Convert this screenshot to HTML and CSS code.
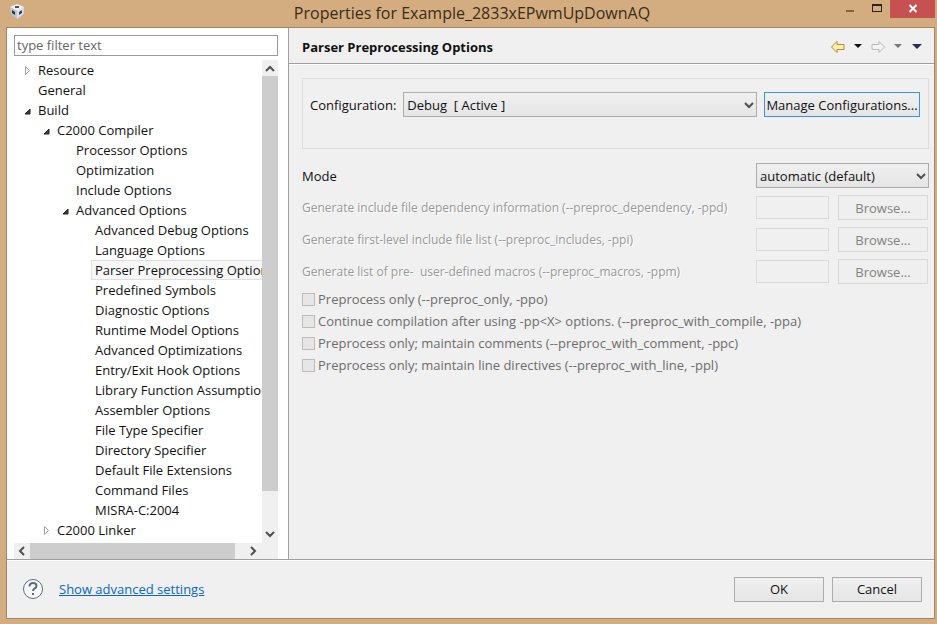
FILE: index.html
```html
<!DOCTYPE html>
<html lang="en">
<head>
<meta charset="utf-8">
<title>Properties for Example_2833xEPwmUpDownAQ</title>
<link rel="stylesheet" href="styles.css">
</head>
<body>
<header class="titlebar">
  <svg class="app-icon" viewBox="0 0 18 18" aria-hidden="true">
    <path d="M9 1l7 3v7l-7 5-6-5-1-7z" fill="#c3cad3"/>
    <path d="M9 1l7 3-7 4-7-4z" fill="#eef1f4"/>
    <path d="M2 4l7 4v8l-6-5z" fill="#bcc4ce"/>
    <path d="M16 4L9 8v8l6-5z" fill="#dde2e8"/>
    <path d="M7 3h4v2H7z" fill="#4b5260"/>
    <path d="M4 7l3 2v3l-3-2z" fill="#2d3442"/>
    <path d="M11 9l3-2v3l-3 2z" fill="#3a4150"/>
  </svg>
  <h1 class="title">Properties for Example_2833xEPwmUpDownAQ</h1>
  <div class="window-controls">
    <button class="win-btn" type="button" aria-label="Minimize"><svg viewBox="0 0 26 18"><path d="M8 10h8v2H8z" fill="#7d6543"/></svg></button>
    <button class="win-btn" type="button" aria-label="Maximize"><svg viewBox="0 0 26 18"><path d="M8 4h10v8H8zM9 6v5h8V6z" fill="#2d2314" fill-rule="evenodd"/></svg></button>
    <button class="win-btn close" type="button" aria-label="Close"><svg viewBox="0 0 45 18"><path d="M19.500 5l7 7M26.500 5l-7 7" stroke="#fff" stroke-width="2"/></svg></button>
  </div>
</header>
<div class="client">
  <div class="panes">
    <nav class="sidebar" aria-label="Property pages">
      <input class="filter" type="text" placeholder="type filter text" aria-label="Filter">
      <div class="tree-box">
        <ul class="tree">
          <li><div class="row"><button class="twisty" type="button" aria-label="Expand Resource"><svg viewBox="0 0 20 20"><path d="M11.500 6.500v8l4-4z" fill="#fff" stroke="#a0a0a0"/></svg></button><span class="node">Resource</span></div></li>
          <li><div class="row"><span class="node leaf">General</span></div></li>
          <li><div class="row"><button class="twisty" type="button" aria-label="Collapse Build"><svg viewBox="0 0 20 20"><path d="M16 9v5h-5z" fill="#404040" stroke="#202020" stroke-linejoin="round"/></svg></button><span class="node">Build</span></div>
            <ul>
              <li><div class="row"><button class="twisty" type="button" aria-label="Collapse C2000 Compiler"><svg viewBox="0 0 20 20"><path d="M16 9v5h-5z" fill="#404040" stroke="#202020" stroke-linejoin="round"/></svg></button><span class="node">C2000 Compiler</span></div>
                <ul>
                  <li><div class="row"><span class="node leaf">Processor Options</span></div></li>
                  <li><div class="row"><span class="node leaf">Optimization</span></div></li>
                  <li><div class="row"><span class="node leaf">Include Options</span></div></li>
                  <li><div class="row"><button class="twisty" type="button" aria-label="Collapse Advanced Options"><svg viewBox="0 0 20 20"><path d="M16 9v5h-5z" fill="#404040" stroke="#202020" stroke-linejoin="round"/></svg></button><span class="node">Advanced Options</span></div>
                    <ul>
                      <li><div class="row"><span class="node leaf">Advanced Debug Options</span></div></li>
                      <li><div class="row"><span class="node leaf">Language Options</span></div></li>
                      <li><div class="row"><span class="node leaf selected">Parser Preprocessing Options</span></div></li>
                      <li><div class="row"><span class="node leaf">Predefined Symbols</span></div></li>
                      <li><div class="row"><span class="node leaf">Diagnostic Options</span></div></li>
                      <li><div class="row"><span class="node leaf">Runtime Model Options</span></div></li>
                      <li><div class="row"><span class="node leaf">Advanced Optimizations</span></div></li>
                      <li><div class="row"><span class="node leaf">Entry/Exit Hook Options</span></div></li>
                      <li><div class="row"><span class="node leaf">Library Function Assumptions</span></div></li>
                      <li><div class="row"><span class="node leaf">Assembler Options</span></div></li>
                      <li><div class="row"><span class="node leaf">File Type Specifier</span></div></li>
                      <li><div class="row"><span class="node leaf">Directory Specifier</span></div></li>
                      <li><div class="row"><span class="node leaf">Default File Extensions</span></div></li>
                      <li><div class="row"><span class="node leaf">Command Files</span></div></li>
                      <li><div class="row"><span class="node leaf">MISRA-C:2004</span></div></li>
                    </ul>
                  </li>
                </ul>
              </li>
              <li><div class="row"><button class="twisty" type="button" aria-label="Expand C2000 Linker"><svg viewBox="0 0 20 20"><path d="M11.500 6.500v8l4-4z" fill="#fff" stroke="#a0a0a0"/></svg></button><span class="node">C2000 Linker</span></div></li>
            </ul>
          </li>
        </ul>
        <div class="scroll vertical">
          <button type="button" aria-label="Scroll up"><svg viewBox="0 0 16 16"><path d="M4 11l4-4 4 4" /></svg></button>
          <div class="track"><div class="thumb"></div></div>
          <button type="button" aria-label="Scroll down"><svg viewBox="0 0 16 16"><path d="M4 5l4 4 4-4" /></svg></button>
        </div>
        <div class="scroll horizontal">
          <button type="button" aria-label="Scroll left"><svg viewBox="0 0 16 16"><path d="M10 4L6 8l4 4" /></svg></button>
          <div class="track"><div class="thumb"></div></div>
          <button type="button" aria-label="Scroll right"><svg viewBox="0 0 16 16"><path d="M5 4l4 4-4 4" /></svg></button>
        </div>
        <div class="corner"></div>
      </div>
    </nav>
    <main class="page">
      <div class="page-head">
        <h2>Parser Preprocessing Options</h2>
        <div class="history">
          <button type="button" aria-label="Back"><svg width="16" height="14" viewBox="0 0 16 14"><path d="M1.500 7L7 1.500v3h7v5H7v3z" fill="#fdf0b4" stroke="#b58a2c"/></svg></button>
          <button class="drop" type="button" aria-label="Back history"><svg width="8" height="5" viewBox="0 0 8 5"><path d="M0 0h8L4 4z" fill="#111"/></svg></button>
          <button type="button" aria-label="Forward"><svg width="16" height="14" viewBox="0 0 16 14"><path d="M14.500 7L9 1.500v3H2v5h7v3z" fill="#f4f4f4" stroke="#b9b9b9"/></svg></button>
          <button class="drop" type="button" aria-label="Forward history"><svg width="8" height="5" viewBox="0 0 8 5"><path d="M0 0h8L4 4z" fill="#777"/></svg></button>
          <button class="menu" type="button" aria-label="View menu"><svg width="10" height="5" viewBox="0 0 10 5"><path d="M0 0h10L5 5z" fill="#2c2c5c"/></svg></button>
        </div>
      </div>
      <form class="form">
        <div class="config">
          <label for="config">Configuration:</label>
          <div class="select grow">
            <select id="config"><option>Debug&nbsp; [ Active ]</option></select>
            <svg viewBox="0 0 10 8" aria-hidden="true"><path d="M1 2l4 4 4-4"/></svg>
          </div>
          <button class="btn focus" type="button">Manage Configurations...</button>
        </div>
        <div class="mode">
          <label for="mode">Mode</label>
          <div class="select">
            <select id="mode"><option>automatic (default)</option></select>
            <svg viewBox="0 0 10 8" aria-hidden="true"><path d="M1 2l4 4 4-4"/></svg>
          </div>
        </div>
        <div class="field"><label for="ppd">Generate include file dependency information (--preproc_dependency, -ppd)</label><input id="ppd" type="text" disabled><button class="btn" type="button" disabled>Browse...</button></div>
        <div class="field"><label for="ppi">Generate first-level include file list (--preproc_includes, -ppi)</label><input id="ppi" type="text" disabled><button class="btn" type="button" disabled>Browse...</button></div>
        <div class="field"><label for="ppm">Generate list of pre-&nbsp; user-defined macros (--preproc_macros, -ppm)</label><input id="ppm" type="text" disabled><button class="btn" type="button" disabled>Browse...</button></div>
        <div class="checks">
          <label><input type="checkbox" disabled>Preprocess only (--preproc_only, -ppo)</label>
          <label><input type="checkbox" disabled>Continue compilation after using -pp&lt;X&gt; options. (--preproc_with_compile, -ppa)</label>
          <label><input type="checkbox" disabled>Preprocess only; maintain comments (--preproc_with_comment, -ppc)</label>
          <label><input type="checkbox" disabled>Preprocess only; maintain line directives (--preproc_with_line, -ppl)</label>
        </div>
      </form>
    </main>
  </div>
  <footer class="footer">
    <button class="help" type="button" aria-label="Help"><svg viewBox="0 0 22 22"><circle cx="11" cy="11" r="9.500" fill="#f8f9fb" stroke="#5f6b85"/><path d="M7.500 8.500q0-3.500 3.500-3.500t3.500 3q0 1.500-2 2.700-1.500 1-1.500 2.300" fill="none" stroke="#5f6b85" stroke-width="2"/><path d="M10 15h2v2h-2z" fill="#5f6b85"/></svg></button>
    <a href="#">Show advanced settings</a>
    <div class="actions">
      <button class="btn" type="button">OK</button>
      <button class="btn" type="button">Cancel</button>
    </div>
  </footer>
</div>
</body>
</html>
```
FILE: styles.css
```css
* { box-sizing: border-box; }

body {
  margin: 0;
  min-height: 100vh;
  display: flex;
  flex-direction: column;
  padding: 0 2px 5px 6px;
  background: #d3ac7f;
  color: #111;
  font: 13px/20px "Open Sans", "Noto Sans", sans-serif;
}

button, input, select { font: inherit; color: inherit; }
button { padding: 0; border: 0; background: none; }
svg { display: block; }

.titlebar { display: flex; height: 27px; }
.app-icon { width: 18px; height: 18px; margin: 3px 0 0 2px; }
.title {
  flex: 1;
  margin: 0 0 0 80px;
  font-size: 16px;
  line-height: 27px;
  font-weight: 400;
  text-align: center;
  color: #3a2c1a;
}
.window-controls { display: flex; align-items: flex-start; }
.win-btn { width: 26px; height: 18px; }
.win-btn.close { width: 45px; background: #c75050; }

.client {
  flex: 1;
  display: flex;
  flex-direction: column;
  border: 1px solid #a5855f;
  background: #f0f0f0;
}
.panes { flex: 1; display: flex; }

.sidebar {
  width: 282px;
  display: flex;
  flex-direction: column;
  padding: 7px 10px 0 7px;
  background: #fff;
  border-right: 1px solid #a0a0a0;
}
.filter {
  height: 21px;
  width: 100%;
  padding: 0 2px 1px;
  border: 1px solid #999;
  background: #fff;
}
.filter::placeholder { color: #666; opacity: 1; }
.tree-box {
  flex: 1;
  margin-top: 4px;
  display: grid;
  grid-template: 1fr 16px / 1fr 16px;
}
.tree { overflow: hidden; min-width: 0; }
.tree, .tree ul { margin: 0; padding: 0; list-style: none; }
.tree ul { padding-left: 19px; }
.row { display: flex; height: 20px; }
.twisty { flex: none; width: 20px; height: 20px; }
.node {
  padding: 0 3px;
  border: 1px solid transparent;
  line-height: 18px;
  white-space: nowrap;
}
.leaf { margin-left: 20px; }
.selected { background: #f7f7f7; border-color: #dedede; }

.scroll { display: flex; background: #f0f0f0; }
.scroll path { fill: none; stroke: #505050; stroke-width: 2; }
.scroll button { width: 16px; height: 16px; }
.vertical { flex-direction: column; }
.track { flex: 1; display: flex; }
.vertical .track { flex-direction: column; }
.thumb { background: #cdcdcd; }
.vertical .thumb { height: 92%; }
.horizontal .thumb { width: 95%; }
.corner { background: #f0f0f0; }

.page { flex: 1; min-width: 0; }
.page-head {
  display: flex;
  align-items: center;
  justify-content: space-between;
  height: 36px;
  padding: 2px 12px 0 13px;
  border-bottom: 1px solid #a0a0a0;
  box-shadow: 0 1px #fff;
}
.page-head h2 { margin: 0; font-size: 13px; font-weight: 700; }
.history { display: flex; align-items: center; gap: 8px; }
.history .menu { margin-left: 2px; }

.form { padding: 14px 5px 0 13px; }
.config {
  display: flex;
  gap: 7px;
  height: 71px;
  padding: 13px 8px 0 7px;
  border: 1px solid #dcdcdc;
}
.config label { line-height: 26px; }
.grow { flex: 1; }
.select { position: relative; height: 25px; }
.select select {
  appearance: none;
  width: 100%;
  height: 100%;
  padding: 0 16px 0 3px;
  border: 1px solid #acacac;
  border-radius: 0;
  background: linear-gradient(#f0f0f0, #e5e5e5);
}
.select svg {
  position: absolute;
  right: 3px;
  top: 9px;
  width: 10px;
  height: 8px;
  pointer-events: none;
}
.select path { fill: none; stroke: #505050; stroke-width: 2; }

.btn {
  width: 90px;
  height: 25px;
  border: 1px solid #acacac;
  background: linear-gradient(#f0f0f0, #e5e5e5);
  white-space: nowrap;
}
.btn.focus { width: 156px; border-color: #3c93e0; }
.btn:disabled { border-color: #d9d9d9; background: #efefef; color: #838383; }

.mode { display: flex; justify-content: space-between; align-items: center; margin-top: 14px; }
.mode .select { width: 173px; }
.field { display: flex; align-items: center; height: 25px; margin: 7px 1px 0 0; }
.field label { flex: 1; min-width: 0; color: #999; font-size: 12px; text-shadow: 1px 1px #fff; white-space: nowrap; }
.field input {
  width: 73px;
  height: 23px;
  margin-right: 9px;
  border: 1px solid #d9d9d9;
  background: #f0f0f0;
}
.checks { display: flex; flex-direction: column; gap: 2px; margin-top: 5px; color: #6d6d6d; }
.checks label { display: flex; align-items: center; gap: 3px; }
.checks input {
  appearance: none;
  width: 13px;
  height: 13px;
  margin: 0;
  border: 1px solid #bcbcbc;
  background: #e6e6e6;
}

.footer {
  display: flex;
  align-items: center;
  height: 59px;
  padding: 0 12px 0 15px;
  border-top: 1px solid #a0a0a0;
  box-shadow: inset 0 1px #fff;
}
.help { width: 22px; height: 22px; margin-right: 15px; }
.footer a { color: #0a66c8; }
.actions { display: flex; gap: 8px; margin-left: auto; }
```
